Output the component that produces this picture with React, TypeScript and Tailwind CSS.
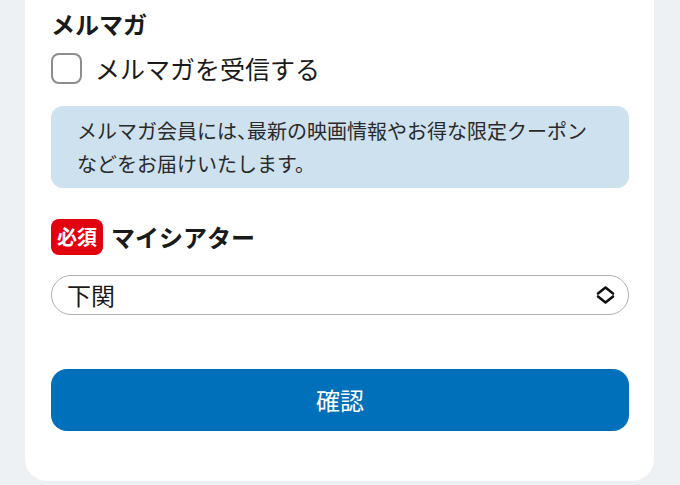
import React from "react";

export default function App() {
  return (
    <div
      className="w-[680px] h-[485px] bg-[#edf1f4] overflow-hidden"
      style={{ fontFamily: '"Noto Sans CJK JP", "Noto Sans", sans-serif' }}
    >
      <div className="ml-[25px] w-[629px] bg-white rounded-b-[22px] pl-[26px] pr-[25px] pt-[8px] pb-[50px] text-[#1a1a1a]">
        <h2 className="text-[24px] leading-[32px] font-bold">メルマガ</h2>

        <label className="mt-[12px] flex items-center h-[32px] gap-[13px]">
          <span className="w-[31px] h-[31px] rounded-[8px] border-[2px] border-[#8d8d8d] bg-white shrink-0" />
          <span className="text-[25px] leading-[32px]">メルマガを受信する</span>
        </label>

        <div className="mt-[22px] h-[82px] rounded-[12px] bg-[#cde1ef] pl-[26px] pr-[20px] py-[8px] text-[20px] leading-[33px] text-[#2a2a2a]">
          <p>
            メルマガ会員には<span className="tracking-[-0.5em]">、</span>最新の映画情報やお得な限定クーポン
          </p>
          <p>などをお届けいたします。</p>
        </div>

        <div className="mt-[31px] flex items-center h-[36px] gap-[8px]">
          <span className="w-[52px] h-[36px] rounded-[8px] bg-[#e3000f] text-white font-bold text-[20px] leading-[36px] text-center">
            必須
          </span>
          <span className="text-[24px] leading-[32px] font-bold">マイシアター</span>
        </div>

        <div className="mt-[20px] h-[40px] rounded-full border-[1.5px] border-[#b0b0b0] flex items-center justify-between pl-[15px] pr-[13px]">
          <span className="text-[24px] leading-[32px]">下関</span>
          <svg width="19" height="20" viewBox="0 0 19 20" fill="none" stroke="#111" strokeWidth="2.6" strokeLinecap="round" strokeLinejoin="round">
            <polyline points="2,8.5 9.5,2.5 17,8.5" />
            <polyline points="2,11.5 9.5,17.5 17,11.5" />
          </svg>
        </div>

        <button className="mt-[54px] w-full h-[62px] rounded-[16px] bg-[#0070bb] text-white text-[24px] leading-[32px] flex items-center justify-center">
          確認
        </button>
      </div>
    </div>
  );
}
